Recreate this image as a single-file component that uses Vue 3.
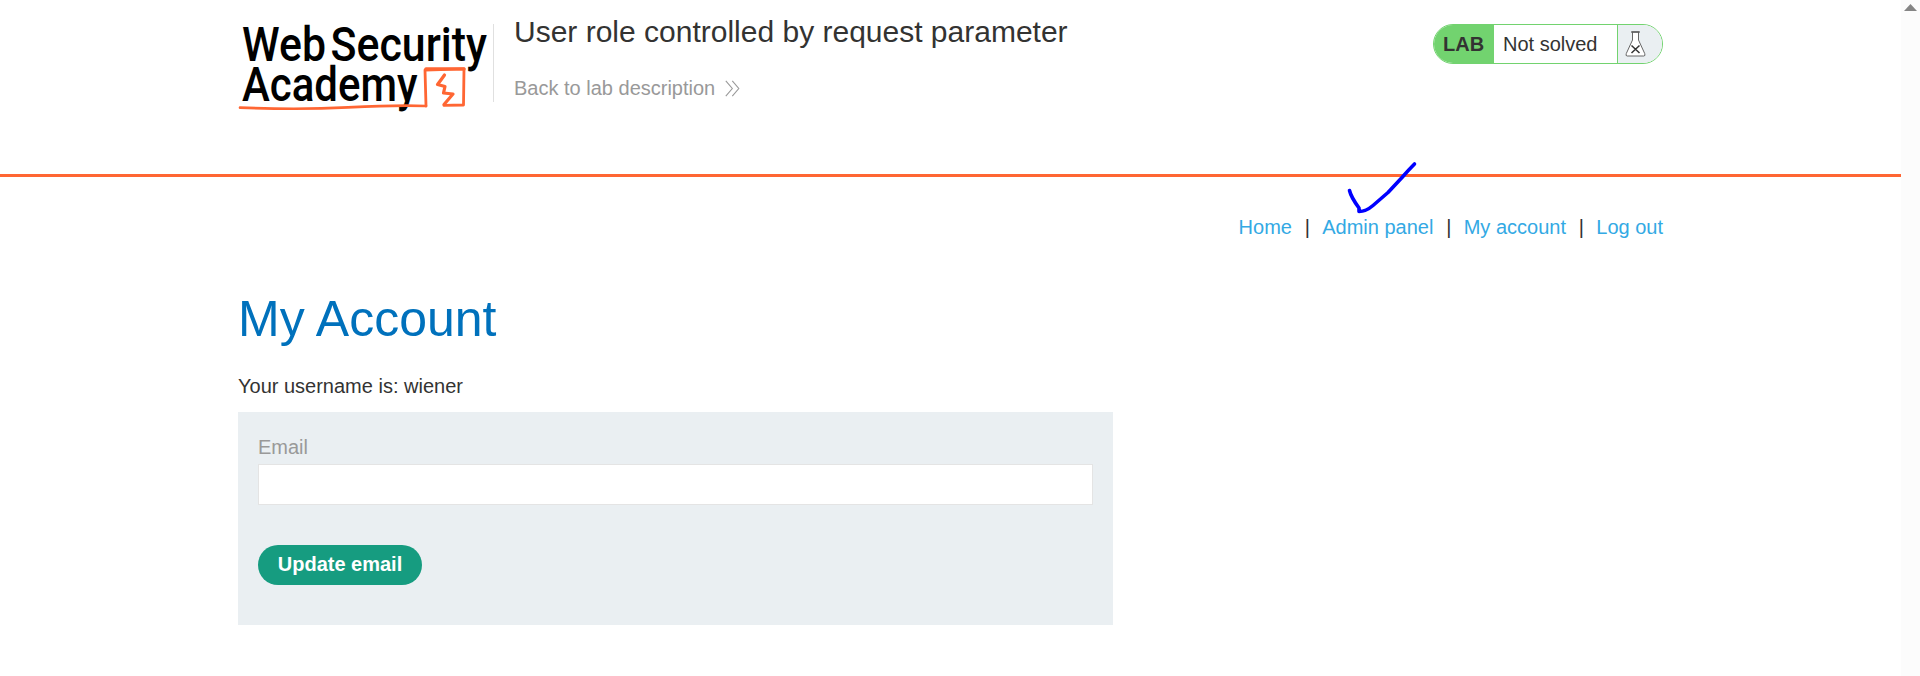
<script setup>
const links = ['Home', 'Admin panel', 'My account', 'Log out']
</script>

<template>
  <div class="window">
    <div class="page">
      <header class="header">
        <div class="container head-row">
          <svg class="logo" width="252" height="100" viewBox="0 0 252 100" aria-label="Web Security Academy">
            <g class="wordmark">
              <text x="4" y="45.5" textLength="84" lengthAdjust="spacingAndGlyphs">Web</text>
              <text x="92.5" y="45.5" textLength="156.5" lengthAdjust="spacingAndGlyphs">Security</text>
              <text x="4" y="86" textLength="175.5" lengthAdjust="spacingAndGlyphs">Academy</text>
            </g>
            <g fill="none" stroke="#ff6633" stroke-linejoin="round" stroke-linecap="round">
              <path d="M2 92.6 Q60 95 110 92.4 T188 91" stroke-width="2.6" />
              <path d="M188 91 L187 55 L226 53.8 L225.5 90 L206 90.4" stroke-width="2.8" />
              <path d="M188 53.9 H226" stroke-width="3.4" />
              <path d="M206.5 60 Q203 65 199.5 69.5 L207 71.5 L205.5 78 L215 79 L206 89.5" stroke-width="3.2" />
            </g>
          </svg>
          <div class="titles">
            <h2>User role controlled by request parameter</h2>
            <a class="back">Back to lab description
              <svg width="15" height="17" viewBox="0 0 15 17" fill="none" stroke="#999" stroke-width="1.1">
                <path d="M.8 .8 L7.3 8.5 L.8 16.2 M7.3 .8 L13.8 8.5 L7.3 16.2" />
              </svg>
            </a>
          </div>
          <div class="status">
            <span class="lab">LAB</span>
            <span class="state">Not solved</span>
            <span class="flask">
              <svg width="22" height="26" viewBox="0 0 22 26">
                <path d="M7.5 1.5 V9 L1.3 22.5 Q.3 25 2.2 25 H18.8 Q20.7 25 19.7 22.5 L13.5 9 V1.5" fill="#fff" stroke="#666" stroke-width="1" />
                <path d="M6.3 1 H14.7" stroke="#444" stroke-width="1.5" />
                <path d="M6.5 14.5 L14.5 22 M14.5 14.5 L6.5 22" stroke="#333" stroke-width="1.5" />
              </svg>
            </span>
          </div>
        </div>
      </header>
      <main class="container">
        <nav class="nav">
          <template v-for="(link, i) in links" :key="link">
            <span v-if="i" class="bar">|</span>
            <a>{{ link }}</a>
          </template>
          <svg class="tick" width="72" height="56" viewBox="0 0 72 56" fill="none" stroke="#0000ff" stroke-width="3.6" stroke-linejoin="round" stroke-linecap="round">
            <path d="M2.5 29.5 Q4 36 12 47 L12 50.5 Q19 50.5 26 44.5 L41 31.5 L55 16.5 Q61 9.5 67.5 3" />
          </svg>
        </nav>
        <h1>My Account</h1>
        <p>Your username is: wiener</p>
        <form class="panel" @submit.prevent>
          <label for="email">Email</label>
          <input id="email" type="email" />
          <button type="submit">Update email</button>
        </form>
      </main>
    </div>
    <div class="scrollbar">
      <svg width="13" height="7" viewBox="0 0 13 7"><path d="M0 7 L6.5 0 L13 7 Z" fill="#858585" /></svg>
    </div>
  </div>
</template>

<style>
body { margin: 0; background: #fff; overflow: hidden; }
</style>

<style scoped>
* { box-sizing: border-box; }
.window {
  display: flex;
  height: 676px;
  font: 20px/25px "Liberation Sans", Arial, sans-serif;
  color: #333332;
}
.page { flex: 1; }
.container { width: 1425px; margin-left: 238px; }
.header { height: 177px; border-bottom: 3px solid #ff6633; }
.head-row { display: flex; padding-top: 15px; }
.logo { flex: none; overflow: visible; }
.wordmark { font: 500 48.5px Roboto, sans-serif; fill: #000; }
.titles {
  margin-top: 9px;
  height: 78px;
  margin-left: 3px;
  padding-left: 20px;
  border-left: 1px solid #e0e0e0;
}
h2 { margin: -9px 0 0; font-size: 30px; font-weight: 400; line-height: 34px; }
.back { display: flex; align-items: center; gap: 10px; margin-top: 27px; color: #999; }
.status {
  display: flex;
  width: 230px;
  height: 40px;
  margin: 9px 0 0 auto;
  border: 1px solid #72d36f;
  border-radius: 20px;
  overflow: hidden;
  line-height: 39px;
}
.lab { width: 60px; padding-left: 9px; background: #72d36f; font-weight: 700; }
.state { width: 124px; padding-left: 9px; border-right: 1px solid #72d36f; }
.flask { flex: 1; display: flex; align-items: center; padding-left: 7px; background: #eaeff2; }
.nav {
  position: relative;
  display: flex;
  justify-content: flex-end;
  padding-top: 38px;
  color: #33a9e4;
}
.bar { width: 30.3px; padding-left: 12.8px; color: #333332; }
.tick { position: absolute; left: 1109px; top: -16px; }
h1 { margin: 49px 0 0; font-size: 50px; font-weight: 400; line-height: 60px; color: #0071bc; }
p { margin: 25px 0 0; }
.panel {
  display: flex;
  flex-direction: column;
  align-items: flex-start;
  width: 875px;
  height: 213px;
  margin-top: 13px;
  padding: 23px 20px;
  background: #eaeff2;
}
label { color: #999; line-height: 25px; }
input { width: 835px; height: 41px; margin-top: 4px; border: 1px solid #e4e4e4; background: #fff; font: inherit; }
button {
  width: 164px;
  height: 40px;
  margin-top: 40px;
  padding: 0 0 2px;
  border: 0;
  border-radius: 20px;
  background: #169c80;
  color: #fff;
  font: 700 20px/38px "Liberation Sans", Arial, sans-serif;
}
.scrollbar { display: flex; justify-content: center; width: 19px; padding-top: 4px; background: #fcfcfc; }
</style>
